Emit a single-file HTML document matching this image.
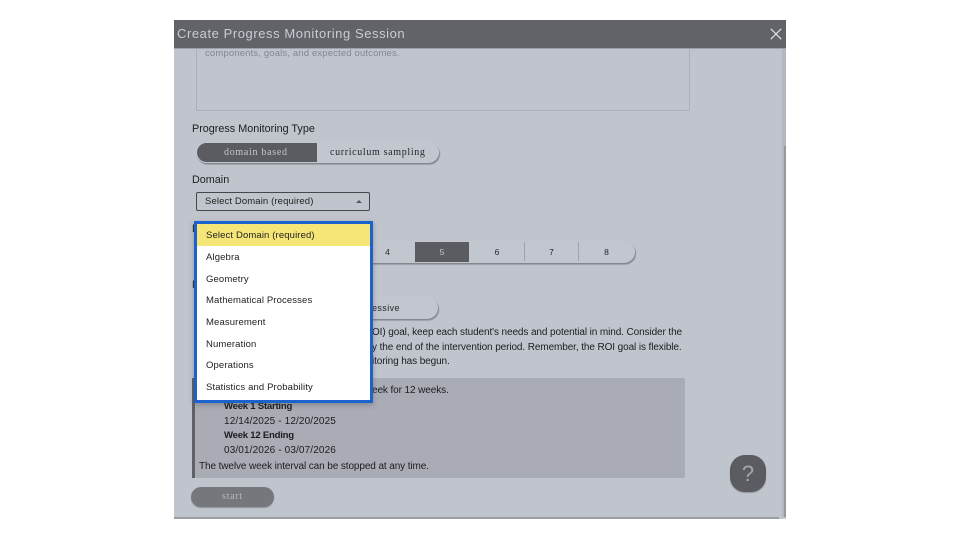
<!DOCTYPE html>
<html>
<head>
<meta charset="utf-8">
<style>
html,body{margin:0;padding:0;background:#fff;width:960px;height:540px;overflow:hidden}
body{position:relative;font-family:"Liberation Sans",sans-serif;color:#1c1d20}
div,span{position:absolute;box-sizing:border-box;white-space:nowrap}
.l{font-size:10.8px;line-height:14px;color:#1c1d20}
.t{font-size:10px;line-height:14px;letter-spacing:-.1px}
.s{font-family:"Liberation Serif",serif;font-size:10px;letter-spacing:.7px;line-height:14px}
.opt{left:0;width:170px;height:21.7px;padding-left:9px;font-size:9.5px;line-height:23px;letter-spacing:.13px;color:#222}
.num{top:0;height:20px;text-align:center;font-size:8.5px;line-height:20px;color:#25262a}
.sep{top:1px;width:1px;height:19px;background:#a0a3ab}
</style>
</head>
<body>
<!-- modal -->
<div style="left:174px;top:20px;width:612px;height:499px;background:#c0c4cd"></div>
<div style="left:174px;top:517px;width:605px;height:2px;background:#9b9ea5"></div>
<div style="left:782px;top:48px;width:4px;height:469px;background:#b4b7c0"></div>
<div style="left:784px;top:146px;width:2px;height:371px;background:#95989f"></div>

<!-- textarea -->
<div style="left:196px;top:48px;width:494px;height:63px;border:1px solid #abafb9;border-top:0;border-radius:0 0 2px 2px"></div>
<div style="left:205px;top:47px;font-size:9.5px;line-height:14px;letter-spacing:.15px;color:#83868e">components, goals, and expected outcomes.</div>

<!-- header -->
<div style="left:174px;top:20px;width:612px;height:29px;background:#616368;border-bottom:1px solid #9da0a8"></div>
<div style="left:177px;top:25px;font-size:13px;line-height:17px;letter-spacing:.57px;color:#c9ccd4">Create Progress Monitoring Session</div>
<svg style="position:absolute;left:770px;top:28px" width="12" height="12" viewBox="0 0 12 12"><path d="M.8.8 11.2 11.2M11.2.8.8 11.2" stroke="#dfe1e6" stroke-width="1.2" fill="none"/></svg>

<!-- Progress Monitoring Type -->
<div class="l" style="left:192px;top:122px;">Progress Monitoring Type</div>
<div style="left:196px;top:142px;width:243px;height:21px;border-radius:11px;background:#c2c6cf;box-shadow:1px 1.5px 1px #83868d"></div>
<div style="left:197px;top:143px;width:120px;height:19px;border-radius:10px 0 0 10px;background:#5b5c62"></div>
<div class="s" style="left:224px;top:146px;color:#c3c6cf">domain based</div>
<div class="s" style="left:330px;top:146px;color:#25262a;letter-spacing:.66px">curriculum sampling</div>

<!-- Domain -->
<div class="l" style="left:192px;top:173px;">Domain</div>
<div style="left:196px;top:192px;width:174px;height:19px;border:1px solid #45474c;border-radius:2px"></div>
<div style="left:205px;top:195px;font-size:9.5px;line-height:14px;letter-spacing:.12px;color:#222">Select Domain (required)</div>
<div style="left:356px;top:200px;width:0;height:0;border-left:3px solid transparent;border-right:3px solid transparent;border-bottom:3px solid #55575c"></div>

<!-- Level -->
<div class="l" style="left:192px;top:222px;">L</div>
<div style="left:196px;top:241px;width:439px;height:22px;border-radius:0 11px 11px 0;background:#c2c6cf;box-shadow:1px 1.5px 1px #83868d">
  <span style="left:219px;top:1px;width:54px;height:20px;background:#5b5c62"></span>
  <span class="num" style="left:164px;width:55px;top:1px">4</span>
  <span class="num" style="left:219px;width:54px;top:1px;color:#c3c6cf">5</span>
  <span class="num" style="left:274px;width:54px;top:1px">6</span>
  <span class="sep" style="left:328px"></span>
  <span class="num" style="left:328px;width:55px;top:1px">7</span>
  <span class="sep" style="left:382px"></span>
  <span class="num" style="left:383px;width:55px;top:1px">8</span>
</div>

<!-- Rate -->
<div class="l" style="left:192px;top:278px;">R</div>
<div style="left:196px;top:297px;width:242px;height:22px;border-radius:0 11px 11px 0;background:#c2c6cf;box-shadow:1px 1.5px 1px #83868d"></div>
<div style="left:372px;top:301px;font-size:9px;line-height:14px;letter-spacing:.4px;color:#25262a">essive</div>

<!-- paragraph -->
<div class="t" style="left:372px;top:326px;">OI) goal, keep each student's needs and potential in mind. Consider the</div>
<div class="t" style="left:372px;top:341px;">y the end of the intervention period. Remember, the ROI goal is flexible.</div>
<div class="t" style="left:372px;top:355px;">itoring has begun.</div>

<!-- info box -->
<div style="left:192px;top:378px;width:493px;height:100px;background:#a9acb5;border-left:3px solid #5f6166;border-radius:0 2px 2px 0"></div>
<div class="t" style="left:372px;top:384px;">eek for 12 weeks.</div>
<div class="t" style="left:224px;top:400px;font-size:9.6px;font-weight:bold;letter-spacing:-.25px">Week 1 Starting</div>
<div class="t" style="left:224px;top:415px;letter-spacing:.13px">12/14/2025 - 12/20/2025</div>
<div class="t" style="left:224px;top:429px;font-size:9.6px;font-weight:bold;letter-spacing:-.25px">Week 12 Ending</div>
<div class="t" style="left:224px;top:444px;letter-spacing:.13px">03/01/2026 - 03/07/2026</div>
<div class="t" style="left:199px;top:460px;">The twelve week interval can be stopped at any time.</div>

<!-- start -->
<div style="left:191px;top:487px;width:83px;height:20px;border-radius:10px;background:#75777d;box-shadow:0 1px 1px #92959c"></div>
<div class="s" style="left:222px;top:490px;color:#b6b9c1">start</div>

<!-- help -->
<div style="left:730px;top:455px;width:36px;height:37px;border-radius:15px;background:#5a5c61;box-shadow:0 1px 1px #90939a"></div>
<div style="left:730px;top:461px;width:36px;text-align:center;font-size:22px;line-height:26px;color:#a5a8b0">?</div>

<!-- dropdown -->
<div style="left:194px;top:221px;width:179px;height:182px;background:#fff;border:3px solid #1c62cd;box-shadow:0 2px 5px rgba(60,60,70,.35)">
  <span class="opt" style="top:0;background:#f6e678;width:173px;height:22px">Select Domain (required)</span>
  <span class="opt" style="top:22px">Algebra</span>
  <span class="opt" style="top:43.6px">Geometry</span>
  <span class="opt" style="top:65.2px">Mathematical Processes</span>
  <span class="opt" style="top:87px">Measurement</span>
  <span class="opt" style="top:108.6px">Numeration</span>
  <span class="opt" style="top:130.2px">Operations</span>
  <span class="opt" style="top:152px">Statistics and Probability</span>
</div>
</body>
</html>
